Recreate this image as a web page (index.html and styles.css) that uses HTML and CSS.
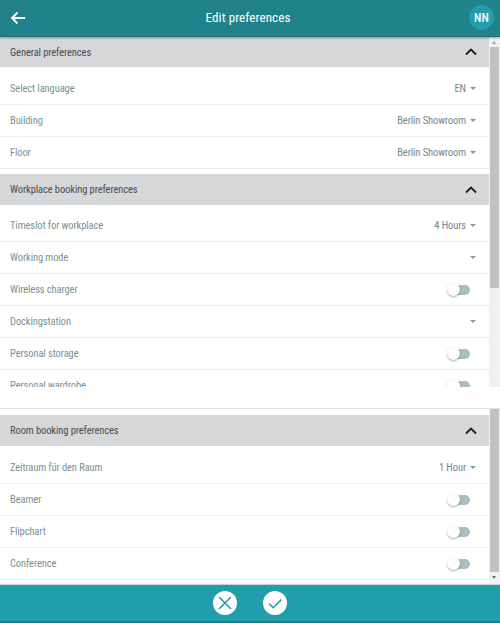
FILE: index.html
```html
<!DOCTYPE html>
<html lang="en">
<head>
  <meta charset="UTF-8" />
  <title>Edit preferences</title>
  <link rel="stylesheet" href="styles.css">
</head>
<body>

  <div class="header">
    <svg class="back" width="18" height="18" viewBox="0 0 18 18"><path d="M16 9H3.5M8.5 3.5 3 9l5.5 5.5" fill="none" stroke="#fff" stroke-width="1.8"/></svg>
    <h1>Edit preferences</h1>
    <div class="avatar">NN</div>
  </div>

  <div class="pane pane-top">
    <div class="pane-content">
      <div class="section-head">
        <span>General preferences</span>
        <svg class="chevron" width="12" height="8" viewBox="0 0 12 8"><path d="M1 6.5 6 1.5l5 5" fill="none" stroke="#1c1c1c" stroke-width="1.8"/></svg>
      </div>
      <div class="row row-first"><span>Select language</span><div class="value">EN<i class="caret"></i></div></div>
      <div class="row"><span>Building</span><div class="value">Berlin Showroom<i class="caret"></i></div></div>
      <div class="row"><span>Floor</span><div class="value">Berlin Showroom<i class="caret"></i></div></div>

      <div class="section-head section-next">
        <span>Workplace booking preferences</span>
        <svg class="chevron" width="12" height="8" viewBox="0 0 12 8"><path d="M1 6.5 6 1.5l5 5" fill="none" stroke="#1c1c1c" stroke-width="1.8"/></svg>
      </div>
      <div class="row row-first"><span>Timeslot for workplace</span><div class="value">4 Hours<i class="caret"></i></div></div>
      <div class="row"><span>Working mode</span><div class="value"><i class="caret"></i></div></div>
      <div class="row"><span>Wireless charger</span><div class="toggle"></div></div>
      <div class="row"><span>Dockingstation</span><div class="value"><i class="caret"></i></div></div>
      <div class="row"><span>Personal storage</span><div class="toggle"></div></div>
      <div class="row"><span>Personal wardrobe</span><div class="toggle"></div></div>
    </div>
    <div class="scrollbar">
      <div class="arrow arrow-up"></div>
      <div class="thumb thumb-top"></div>
    </div>
  </div>

  <div class="break"></div>

  <div class="pane pane-bottom">
    <div class="pane-content">
      <div class="section-head">
        <span>Room booking preferences</span>
        <svg class="chevron" width="12" height="8" viewBox="0 0 12 8"><path d="M1 6.5 6 1.5l5 5" fill="none" stroke="#1c1c1c" stroke-width="1.8"/></svg>
      </div>
      <div class="row row-first"><span>Zeitraum für den Raum</span><div class="value">1 Hour<i class="caret"></i></div></div>
      <div class="row"><span>Beamer</span><div class="toggle"></div></div>
      <div class="row"><span>Flipchart</span><div class="toggle"></div></div>
      <div class="row"><span>Conference</span><div class="toggle"></div></div>
    </div>
    <div class="scrollbar">
      <div class="thumb thumb-bottom"></div>
      <div class="arrow arrow-down"></div>
    </div>
  </div>

  <div class="footer">
    <svg width="24" height="24" viewBox="0 0 24 24"><circle cx="12" cy="12" r="12" fill="#fff"/><path d="M6 6l12 12M18 6 6 18" fill="none" stroke="#209eac" stroke-width="1.6"/></svg>
    <svg width="24" height="24" viewBox="0 0 24 24"><circle cx="12" cy="12" r="12" fill="#fff"/><path d="M6 12.5l4.2 4.2L18.5 8.5" fill="none" stroke="#209eac" stroke-width="1.6"/></svg>
  </div>

</body>
</html>
```

FILE: styles.css
```css
* {
  box-sizing: border-box;
}

html,
body {
  height: 100%;
}

body {
  font-family: Roboto, sans-serif;
  font-size: 10.5px;
  font-stretch: 75%;
  letter-spacing: -0.1px;
  background-color: #fff;
  margin: 0;
  display: flex;
  flex-direction: column;
  overflow: hidden;
}

.header {
  height: 37px;
  flex: none;
  background-color: #22828b;
  color: #fff;
  display: flex;
  align-items: center;
  justify-content: space-between;
  padding: 0 6px 1px 9px;
  border-bottom: 1px solid #1e7078;
  box-shadow: 0 1px 2px rgba(0,0,0,0.35);
  position: relative;
}

.header h1 {
  font-size: 13px;
  font-weight: 400;
  letter-spacing: 0.1px;
  margin: 0;
}

.avatar {
  width: 25px;
  height: 25px;
  border-radius: 50%;
  background-color: #209eac;
  font-size: 12px;
  font-weight: 500;
  letter-spacing: 0;
  display: flex;
  align-items: center;
  justify-content: center;
}

.pane {
  display: flex;
  flex: none;
}

.pane-top {
  height: 350px;
}

.pane-bottom {
  height: 175px;
}

.pane-content {
  flex: 1;
  overflow: hidden;
}

.section-head {
  height: 30px;
  background-color: #d6d7d9;
  color: #4a4d50;
  display: flex;
  align-items: center;
  justify-content: space-between;
  padding: 0 12px 0 10px;
}

.section-next {
  height: 31px;
  margin-top: 5px;
}

.pane-bottom .section-head {
  height: 31px;
  margin-top: 6px;
}

.row {
  height: 32px;
  color: #7b9194;
  display: flex;
  align-items: center;
  justify-content: space-between;
  padding: 0 13px 0 10px;
  border-bottom: 1px solid #e9eeee;
}

.row-first {
  height: 38px;
  padding-top: 5px;
}

.section-next + .row-first {
  height: 37px;
}

.value {
  color: #76868c;
  display: flex;
  align-items: center;
}

.caret {
  margin-left: 4px;
  border-left: 3.5px solid transparent;
  border-right: 3.5px solid transparent;
  border-top: 3.5px solid #7d9a9f;
}

.toggle {
  width: 21px;
  height: 10px;
  border-radius: 5px;
  background-color: #a9bec3;
  position: relative;
  margin-right: 6px;
}

.toggle::before {
  content: "";
  position: absolute;
  left: -2px;
  top: -2px;
  width: 13px;
  height: 13px;
  border-radius: 50%;
  background-color: #fff;
  box-shadow: 0 1px 2px rgba(0,0,0,0.35);
}

.scrollbar {
  width: 11px;
  flex: none;
  background-color: #f1f1f1;
  display: flex;
  flex-direction: column;
}

.arrow {
  height: 10px;
  flex: none;
  position: relative;
}

.arrow::before {
  content: "";
  position: absolute;
  left: 3px;
  top: 4px;
  border-left: 2.5px solid transparent;
  border-right: 2.5px solid transparent;
}

.arrow-up::before {
  border-bottom: 3px solid #a3a3a3;
}

.arrow-down {
  height: 12px;
}

.arrow-down::before {
  border-top: 3px solid #6f6f6f;
}

.thumb {
  background-color: #c1c1c1;
  margin: 0 1px;
}

.thumb-top {
  height: 241px;
}

.thumb-bottom {
  flex: 1;
}

.break {
  height: 22px;
  flex: none;
  background-color: #fff;
  border-bottom: 1px solid #e2e2e2;
}

.footer {
  height: 39px;
  flex: none;
  background-color: #209eac;
  border-top: 1px solid #c9d3d4;
  border-bottom: 2px solid #1f7f88;
  display: flex;
  align-items: center;
  justify-content: center;
  gap: 26px;
}
```
